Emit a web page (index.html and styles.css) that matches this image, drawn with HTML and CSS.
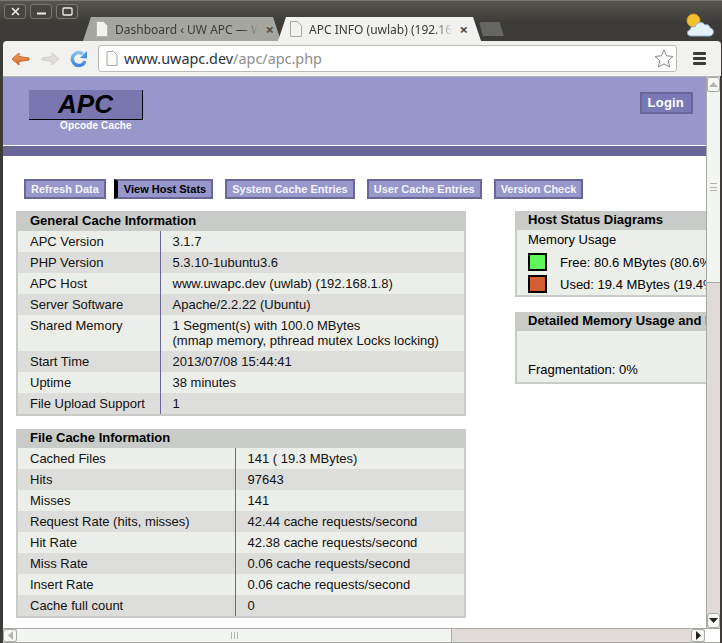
FILE: index.html
```html
<!DOCTYPE html>
<html>
  <head>
    <title>APC INFO (uwlab)</title>
    <link rel="stylesheet" href="styles.css">
  </head>
  <body>
    <div class="window">
      <div class="titlebar">
        <div class="winbuttons">
          <div class="winbtn">
            <svg width="11" height="11" viewBox="0 0 11 11"><path d="M2 2l7 7M9 2l-7 7" stroke="#eeeeea" stroke-width="1.6" fill="none"/></svg>
          </div>
          <div class="winbtn">
            <svg width="11" height="11" viewBox="0 0 11 11"><path d="M1 7.500h9" stroke="#eeeeea" stroke-width="2" fill="none"/></svg>
          </div>
          <div class="winbtn">
            <svg width="11" height="11" viewBox="0 0 11 11"><rect x="1" y="2" width="9" height="7" rx="1" stroke="#eeeeea" stroke-width="1.3" fill="none"/></svg>
          </div>
        </div>
        <div class="tabs">
          <div class="tab">
            <svg class="pageicon" width="14" height="16" viewBox="0 0 14 16"><path d="M1.500 .5h7l4 4v11h-11z" fill="#f2f2ee" stroke="#b5b5b0"/></svg>
            <span class="tabtitle">Dashboard ‹ UW APC — W</span>
            <span class="tabclose">×</span>
          </div>
          <div class="tab active">
            <svg class="pageicon" width="14" height="16" viewBox="0 0 14 16"><path d="M1.500 .5h7l4 4v11h-11z" fill="#f2f2ee" stroke="#a8a8a4"/></svg>
            <span class="tabtitle">APC INFO (uwlab) (192.16</span>
            <span class="tabclose">×</span>
          </div>
          <div class="newtab"></div>
        </div>
        <svg class="weather" width="30" height="26" viewBox="0 0 30 26">
          <circle cx="8.500" cy="8.500" r="6.500" fill="#f2c12e" stroke="#d99a20"/>
          <path d="M6 24c-4 0-5-5-1-6 0-3 3-4 5-3 1-5 8-6 10-2 3-1 5 1 5 3 4 0 5 7 0 8z" fill="#e6f1fa" stroke="#8fb4d6"/>
        </svg>
      </div>

      <div class="toolbar">
        <svg class="navicon" width="20" height="16" viewBox="0 0 20 16">
          <defs><linearGradient id="backfill" x1="0" y1="0" x2="0" y2="1"><stop offset="0" stop-color="#eda468"/><stop offset="1" stop-color="#d9682a"/></linearGradient></defs>
          <path d="M1 8l7-6v3.500l10 1.500v2L8 10.500V14z" fill="url(#backfill)" stroke="#c96a2c"/>
        </svg>
        <svg class="navicon nav-forward" width="20" height="16" viewBox="0 0 20 16"><path d="M19 8l-7-6v3.500L2 7v2l10 1.500V14z" fill="#dfdcda" stroke="#d2cfcd"/></svg>
        <svg class="navicon nav-reload" width="18" height="18" viewBox="0 0 18 18">
          <defs><linearGradient id="reloadfill" x1="0" y1="0" x2="0" y2="1"><stop offset="0" stop-color="#8fc0ee"/><stop offset="1" stop-color="#3f87d6"/></linearGradient></defs>
          <path d="M15 11a6.500 6.500 0 1 1-2-7" fill="none" stroke="url(#reloadfill)" stroke-width="3.400"/>
          <path d="M10 8l7 .5V1z" fill="#4a90dc"/>
        </svg>
        <div class="omnibox">
          <svg width="12" height="15" viewBox="0 0 12 15"><path d="M1 .5h6.500l3.500 3.500v10.500H1z" fill="#fafaf8" stroke="#a8a8a4"/></svg>
          <span class="url"><b>www.uwapc.dev</b>/apc/apc.php</span>
          <svg class="star" width="20" height="19" viewBox="0 0 20 19"><path d="M10 1l2.600 5.800 6.400.7-4.800 4.200 1.400 6.300L10 14.800 4.400 18l1.400-6.300L1 7.500l6.400-.7z" fill="#fff" stroke="#8a8a86"/></svg>
        </div>
        <div class="menu"><span></span><span></span><span></span></div>
      </div>

      <div class="viewport">
        <div class="viewrow">
          <div class="page">
            <div class="head">
              <div class="logo-wrap">
                <div class="logo">APC</div>
                <div class="logo-sub">Opcode Cache</div>
              </div>
              <a class="login">Login</a>
            </div>
            <div class="head-bar"></div>

            <ol class="nav">
              <li><a>Refresh Data</a></li>
              <li><a class="current">View Host Stats</a></li>
              <li><a>System Cache Entries</a></li>
              <li><a>User Cache Entries</a></li>
              <li><a>Version Check</a></li>
            </ol>

            <div class="content">
              <div class="left">
                <div class="panel panel-general">
                  <h2>General Cache Information</h2>
                  <table>
                    <tr><td class="k">APC Version</td><td>3.1.7</td></tr>
                    <tr><td class="k">PHP Version</td><td>5.3.10-1ubuntu3.6</td></tr>
                    <tr><td class="k">APC Host</td><td>www.uwapc.dev (uwlab) (192.168.1.8)</td></tr>
                    <tr><td class="k">Server Software</td><td>Apache/2.2.22 (Ubuntu)</td></tr>
                    <tr><td class="k">Shared Memory</td><td>1 Segment(s) with 100.0 MBytes<br>(mmap memory, pthread mutex Locks locking)</td></tr>
                    <tr><td class="k">Start Time</td><td>2013/07/08 15:44:41</td></tr>
                    <tr><td class="k">Uptime</td><td>38 minutes</td></tr>
                    <tr><td class="k">File Upload Support</td><td>1</td></tr>
                  </table>
                </div>

                <div class="panel panel-file">
                  <h2>File Cache Information</h2>
                  <table>
                    <tr><td class="k">Cached Files</td><td>141 ( 19.3 MBytes)</td></tr>
                    <tr><td class="k">Hits</td><td>97643</td></tr>
                    <tr><td class="k">Misses</td><td>141</td></tr>
                    <tr><td class="k">Request Rate (hits, misses)</td><td>42.44 cache requests/second</td></tr>
                    <tr><td class="k">Hit Rate</td><td>42.38 cache requests/second</td></tr>
                    <tr><td class="k">Miss Rate</td><td>0.06 cache requests/second</td></tr>
                    <tr><td class="k">Insert Rate</td><td>0.06 cache requests/second</td></tr>
                    <tr><td class="k">Cache full count</td><td>0</td></tr>
                  </table>
                </div>
              </div>

              <div class="right">
                <div class="panel panel-host">
                  <h2>Host Status Diagrams</h2>
                  <div class="usage-title">Memory Usage</div>
                  <div class="legend"><span class="swatch free"></span>Free: 80.6 MBytes (80.6%)</div>
                  <div class="legend"><span class="swatch used"></span>Used: 19.4 MBytes (19.4%)</div>
                </div>

                <div class="panel panel-detail">
                  <h2>Detailed Memory Usage and Fragmentation</h2>
                  <div class="frag">Fragmentation: 0%</div>
                </div>
              </div>
            </div>
          </div>

          <div class="vscroll">
            <div class="sbtn"><svg width="9" height="5" viewBox="0 0 9 5"><path d="M0 5l4.500-5L9 5z" fill="#b5b5b0"/></svg></div>
            <div class="vthumb"><span class="grip"></span></div>
            <div class="vtrack"></div>
            <div class="sbtn"><svg width="9" height="5" viewBox="0 0 9 5"><path d="M0 0l4.500 5L9 0z" fill="#222"/></svg></div>
          </div>
        </div>

        <div class="hscroll">
          <div class="sbtn"><svg width="5" height="9" viewBox="0 0 5 9"><path d="M5 0L0 4.500 5 9z" fill="#b5b5b0"/></svg></div>
          <div class="hthumb"><span class="hgrip"></span></div>
          <div class="htrack"></div>
          <div class="sbtn"><svg width="5" height="9" viewBox="0 0 5 9"><path d="M0 0l5 4.500L0 9z" fill="#222"/></svg></div>
          <div class="corner"></div>
        </div>
      </div>
    </div>
  </body>
</html>
```

FILE: styles.css
```css
/* Reset default styles */
html, body, h2, table, td, ol, li {
  margin: 0;
  padding: 0;
}

body {
  width: 722px;
  height: 643px;
  overflow: hidden;
  font-family: "Liberation Sans", Arial, sans-serif;
  font-size: 13px;
  background-color: #3c3b37;
}

/* Browser window */
.window {
  display: flex;
  flex-direction: column;
  width: 722px;
  height: 643px;
  box-sizing: border-box;
  padding: 0 2px 0 3px;
  background-color: #3c3b37;
}

/* Title bar and tabs */
.titlebar {
  display: flex;
  flex: none;
  height: 41px;
  margin: 0 -2px 0 -3px;
  padding-left: 4px;
  border-top: 1px solid #77766f;
  box-sizing: border-box;
  background: linear-gradient(#56554f, #3c3b37 22px);
}

.winbuttons {
  display: flex;
  flex: none;
  gap: 4px;
  height: 16px;
  margin-top: 3px;
}

.winbtn {
  display: flex;
  align-items: center;
  justify-content: center;
  width: 22px;
  height: 15px;
  border: 1px solid #77766f;
  border-radius: 3px;
  box-sizing: border-box;
  background-color: #45443f;
}

.tabs {
  display: flex;
  flex: none;
  align-items: flex-end;
  height: 40px;
  margin-left: 5px;
}

.tab {
  display: flex;
  align-items: center;
  gap: 6px;
  width: 198px;
  height: 24px;
  box-sizing: border-box;
  padding: 0 7px 0 12px;
  margin-right: -3px;
  border-radius: 5px 5px 0 0;
  background-color: #a6a6a1;
  clip-path: polygon(0 100%, 8px 0, calc(100% - 8px) 0, 100% 100%);
  font-family: "Noto Sans", sans-serif;
  font-size: 12px;
  color: #3c3b37;
}

.tab.active {
  width: 203px;
  padding: 0 13px 0 11px;
  background-color: #f1f2f0;
}

.pageicon {
  flex: none;
}

.tabtitle {
  flex: 1;
  overflow: hidden;
  white-space: nowrap;
  -webkit-mask-image: linear-gradient(to left, transparent, #000 18px);
  mask-image: linear-gradient(to left, transparent, #000 18px);
}

.tabclose {
  flex: none;
  font-size: 15px;
  font-weight: bold;
  line-height: 15px;
  color: #4d4d49;
}

.newtab {
  width: 25px;
  height: 14px;
  margin: 0 0 5px 1px;
  border-radius: 3px 5px 1px 1px;
  background-color: #666662;
  clip-path: polygon(0 0, 82% 0, 100% 100%, 16% 100%);
}

.weather {
  flex: none;
  margin: 11px 0 0 181px;
}

/* Toolbar */
.toolbar {
  display: flex;
  flex: none;
  align-items: center;
  height: 35px;
  margin-right: -1px;
  padding: 0 15px 0 8px;
  border-radius: 4px 4px 0 0;
  background-color: #f1f2f0;
}

.navicon {
  flex: none;
  margin-right: 9px;
}

.nav-forward {
  margin-right: 11px;
}

.nav-reload {
  margin-right: 0;
  margin-left: -1px;
}

.omnibox {
  display: flex;
  flex: 1;
  align-items: center;
  height: 27px;
  margin-left: 10px;
  padding: 0 2px 0 7px;
  border: 1px solid #b9b9b5;
  border-radius: 3px;
  box-sizing: border-box;
  background-color: #ffffff;
}

.url {
  flex: 1;
  margin-left: 6px;
  font-family: "Noto Sans", sans-serif;
  font-size: 14.400px;
  color: #8e8e8e;
}

.url b {
  font-weight: normal;
  color: #2d3440;
}

.menu {
  display: flex;
  flex: none;
  flex-direction: column;
  gap: 2px;
  width: 13px;
  margin-left: 16px;
}

.menu span {
  height: 3px;
  border-radius: 1px;
  background-color: #3c3b37;
}

/* Page viewport and scrollbars */
.viewport {
  display: flex;
  flex: 1;
  flex-direction: column;
  min-height: 0;
  border-top: 1px solid #b5b5ae;
  background-color: #ffffff;
}

.viewrow {
  display: flex;
  flex: 1;
  min-height: 0;
}

.page {
  flex: 1;
  min-width: 0;
  overflow: hidden;
}

.vscroll {
  display: flex;
  flex: none;
  flex-direction: column;
  width: 14px;
  border-left: 1px solid #a8a8a4;
  box-sizing: border-box;
  background-color: #e0dbd9;
}

.sbtn {
  display: flex;
  flex: none;
  align-items: center;
  justify-content: center;
  width: 13px;
  height: 15px;
  border: 1px solid #a8a8a4;
  border-radius: 3px;
  box-sizing: border-box;
  background-color: #f7f8f6;
}

.vthumb {
  display: flex;
  flex: none;
  align-items: center;
  justify-content: center;
  height: 191px;
  border-bottom: 1px solid #a8a8a4;
  box-sizing: border-box;
  background-color: #f3f5f2;
}

.grip {
  width: 7px;
  height: 6px;
  border-top: 1px solid #b5b5b0;
  border-bottom: 1px solid #b5b5b0;
  background: linear-gradient(#b5b5b0, #b5b5b0) center / 100% 1px no-repeat;
}

.vtrack {
  flex: 1;
}

.hscroll {
  display: flex;
  flex: none;
  height: 15px;
  border-top: 1px solid #a8a8a4;
  border-bottom: 1px solid #a8a8a4;
  box-sizing: border-box;
  background-color: #e0dbd9;
}

.hscroll .sbtn {
  height: 13px;
  width: 14px;
}

.hthumb {
  display: flex;
  flex: none;
  align-items: center;
  justify-content: center;
  width: 435px;
  border-right: 1px solid #a8a8a4;
  box-sizing: border-box;
  background-color: #f3f5f2;
}

.hgrip {
  width: 7px;
  height: 7px;
  border-left: 1px solid #b5b5b0;
  border-right: 1px solid #b5b5b0;
  background: linear-gradient(#b5b5b0, #b5b5b0) center / 1px 100% no-repeat;
  box-sizing: border-box;
}

.htrack {
  flex: 1;
}

.corner {
  flex: none;
  width: 15px;
  background-color: #ffffff;
}

/* APC header */
.head {
  display: flex;
  justify-content: space-between;
  height: 68px;
  border-bottom: 1px solid #ffffff;
  background-color: #9797cb;
}

.logo-wrap {
  margin: 13px 0 0 26px;
}

.logo {
  width: 114px;
  height: 30px;
  border-right: 1px solid #000000;
  border-bottom: 1px solid #000000;
  box-sizing: border-box;
  background-color: #7a76b0;
  text-align: center;
  font-size: 26px;
  font-weight: bold;
  font-style: italic;
  line-height: 29px;
  color: #000000;
}

.logo-sub {
  margin-left: 31px;
  font-size: 10px;
  font-weight: bold;
  letter-spacing: 0.15px;
  line-height: 11px;
  color: #ffffff;
}

.login {
  align-self: flex-start;
  margin: 15px 13px 0 0;
  padding: 2px 7px 2px 6px;
  border: 2px solid #6a6698;
  background-color: #7a78b5;
  font-weight: bold;
  letter-spacing: 0.2px;
  line-height: 14px;
  color: #ffffff;
}

.head-bar {
  height: 10px;
  background-color: #6a6698;
}

/* Nav buttons */
.nav {
  display: flex;
  gap: 8px;
  margin: 23px 0 0 21px;
  list-style: none;
}

.nav li:nth-child(n+3) {
  margin-left: 4px;
}

.nav a {
  display: block;
  padding: 1px 5px;
  border: 2px solid #6a6698;
  background-color: #9797cb;
  white-space: nowrap;
  font-size: 11px;
  font-weight: bold;
  line-height: 14px;
  color: #f4f4fb;
}

.nav a.current {
  padding-left: 6px;
  border-left: 4px solid #000000;
  color: #000000;
}

/* Info panels */
.content {
  display: flex;
  margin: 12px 0 0 13px;
}

.left {
  flex: none;
  width: 450px;
}

.right {
  flex: none;
  width: 330px;
  margin-left: 49px;
}

.panel {
  box-sizing: border-box;
  border: 2px solid #c9cbc8;
  border-top: none;
  background-color: #eceeea;
  white-space: nowrap;
}

.panel h2 {
  height: 20px;
  margin: 0 -2px;
  padding-left: 14px;
  background-color: #c9cbc8;
  font-size: 13px;
  font-weight: bold;
  line-height: 19px;
  color: #000000;
}

.panel table {
  width: 100%;
  border-collapse: collapse;
}

.panel td {
  padding: 3px 0 3px 12px;
  line-height: 15px;
  vertical-align: top;
  color: #111111;
}

.panel td.k {
  box-sizing: border-box;
  border-right: 1px solid #6a6698;
}

.panel tr:nth-child(even) td {
  background-color: #dddedc;
}

.panel-general td.k {
  width: 142px;
}

.panel-file {
  margin-top: 13px;
}

.panel-file h2 {
  height: 19px;
  line-height: 18px;
}

.panel-file td.k {
  width: 217px;
}

.panel-host h2,
.panel-detail h2 {
  height: 19px;
  padding-left: 13px;
  line-height: 18px;
}

.usage-title {
  height: 21px;
  padding-left: 11px;
  line-height: 19px;
}

.legend {
  display: flex;
  align-items: center;
  height: 22px;
  padding-left: 11px;
}

.swatch {
  flex: none;
  width: 19px;
  height: 18px;
  margin-right: 13px;
  border: 2px solid #000000;
  box-sizing: border-box;
}

.swatch.free {
  background-color: #60f55a;
}

.swatch.used {
  background-color: #d35f32;
}

.panel-detail {
  margin-top: 15px;
}

.frag {
  padding: 31px 0 5px 11px;
  line-height: 15px;
}
```
